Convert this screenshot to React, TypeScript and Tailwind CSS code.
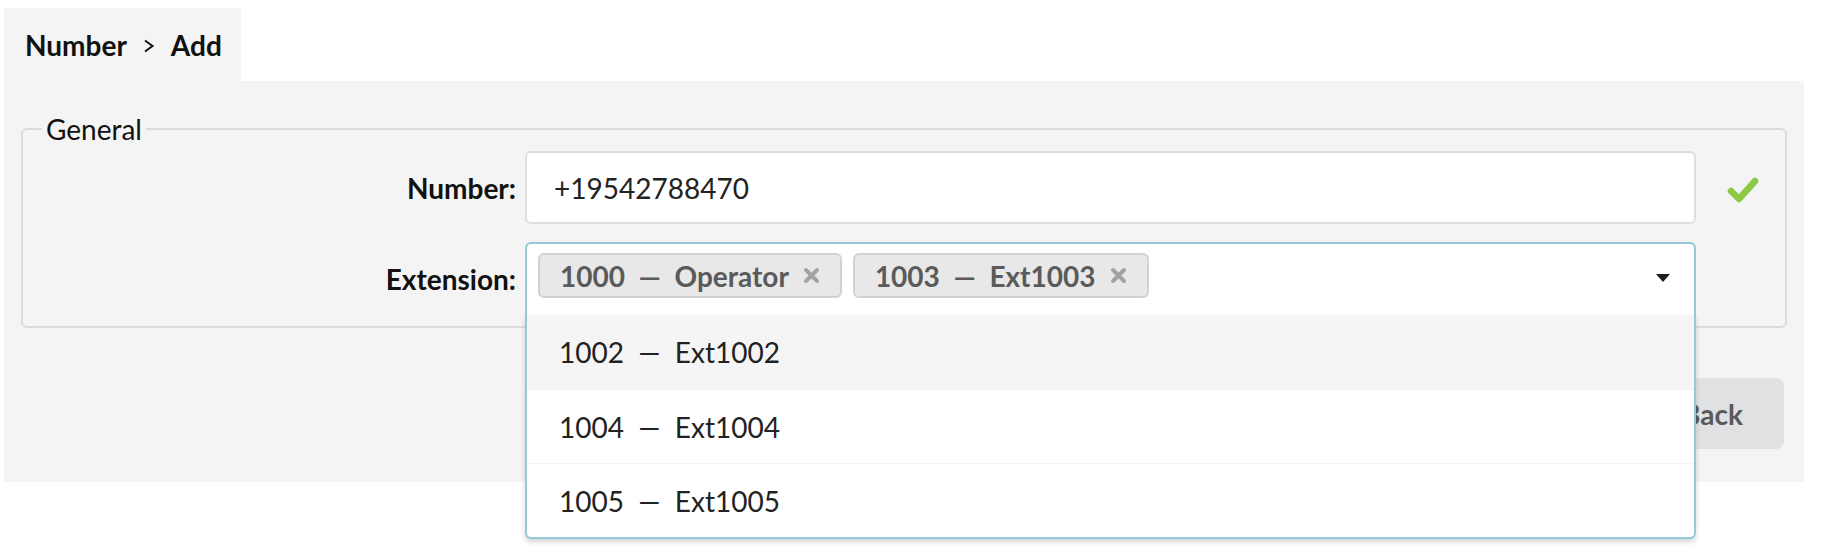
import React from 'react';

const tags = [
  { id: '1000', name: 'Operator' },
  { id: '1003', name: 'Ext1003' },
];

const options = [
  { id: '1002', name: 'Ext1002' },
  { id: '1004', name: 'Ext1004' },
  { id: '1005', name: 'Ext1005' },
];

function Chevron() {
  return (
    <svg aria-hidden="true" width="12" height="14" viewBox="0 0 12 14" className="mx-[16px] mt-[3px]">
      <path d="M2 1.5 9.5 7 2 12.5" fill="none" stroke="#111" strokeWidth="2" />
    </svg>
  );
}

function Check() {
  return (
    <svg aria-hidden="true" width="32" height="28" viewBox="0 0 32 28">
      <path d="M4 15l8 8L28 5" fill="none" stroke="#8cc944" strokeWidth="6.5" strokeLinecap="round" strokeLinejoin="round" />
    </svg>
  );
}

function Cross() {
  return (
    <svg aria-hidden="true" width="17" height="17" viewBox="0 0 17 17">
      <path d="M3 3l11 11M14 3 3 14" stroke="#a3a3a3" strokeWidth="4" strokeLinecap="round" />
    </svg>
  );
}

function Label({ children }: { children: React.ReactNode }) {
  return <div className="w-[502px] shrink-0 pr-[9px] text-right text-[28px] font-bold text-[#111]">{children}</div>;
}

export default function App() {
  return (
    <div className="min-h-screen bg-white pl-[4px] pt-[8px] font-['Lato',sans-serif]">
      <div className="flex h-[73px] w-[237px] items-center bg-[#f4f4f4] pl-[21px] text-[28px] font-bold text-[#111]">
        Number
        <Chevron />
        Add
      </div>

      <div className="w-[1800px] bg-[#f4f4f4] px-[17px] pb-[33px] pt-[31px]">
        <fieldset className="rounded-[6px] border-2 border-[#dcdcdc] pb-[11px]">
          <legend className="ml-[19px] px-[4px] text-[28px] leading-[34px] text-[#111]">General</legend>

          <div className="mt-[5px] flex items-center">
            <Label>Number:</Label>
            <div className="flex h-[73px] w-[1171px] items-center rounded-[6px] border-2 border-[#dedede] bg-white pl-[27px] text-[28px] text-[#222]">
              +19542788470
            </div>
            <div className="flex flex-1 justify-center pl-[4px] pt-[4px]">
              <Check />
            </div>
          </div>

          <div className="mt-[18px] flex items-center">
            <Label>Extension:</Label>
            <div className="relative z-10 w-[1171px]">
              <div className="flex h-[73px] items-start gap-[11px] rounded-t-[6px] border-2 border-b-0 border-[#96c8da] bg-white pl-[11px] pt-[9px]">
                {tags.map((t) => (
                  <div
                    key={t.id}
                    className="flex h-[45px] items-center gap-[14px] whitespace-pre rounded-[6px] border-2 border-[#d2d2d2] bg-[#e8e8e8] pl-[20px] pr-[20px] text-[28px] font-bold text-[#5a5a5a]"
                  >
                    <span>{`${t.id}  —  ${t.name}`}</span>
                    <Cross />
                  </div>
                ))}
                <div className="ml-auto mr-[24px] mt-[21px] h-0 w-0 border-x-[7px] border-t-[8px] border-x-transparent border-t-[#1b1b1b]" />
              </div>
              <div className="absolute left-0 right-0 top-full overflow-hidden rounded-b-[6px] border-2 border-t-0 border-[#96c8da] bg-white shadow-[0_3px_5px_rgba(34,36,38,0.18)]">
                {options.map((o, i) => (
                  <div
                    key={o.id}
                    className={`flex h-[74px] items-center whitespace-pre pl-[32px] text-[28px] text-[#222] ${
                      i === 0 ? 'bg-[#f5f5f5]' : 'border-t border-[#f3f3f3]'
                    }`}
                  >
                    {`${o.id}  —  ${o.name}`}
                  </div>
                ))}
              </div>
            </div>
          </div>
        </fieldset>

        <div className="mt-[50px] flex justify-end pr-[3px]">
          <button className="h-[71px] w-[143px] rounded-[8px] bg-[#e0e1e2] text-[28px] font-bold text-[#5a5a5a]">
            Back
          </button>
        </div>
      </div>
    </div>
  );
}
